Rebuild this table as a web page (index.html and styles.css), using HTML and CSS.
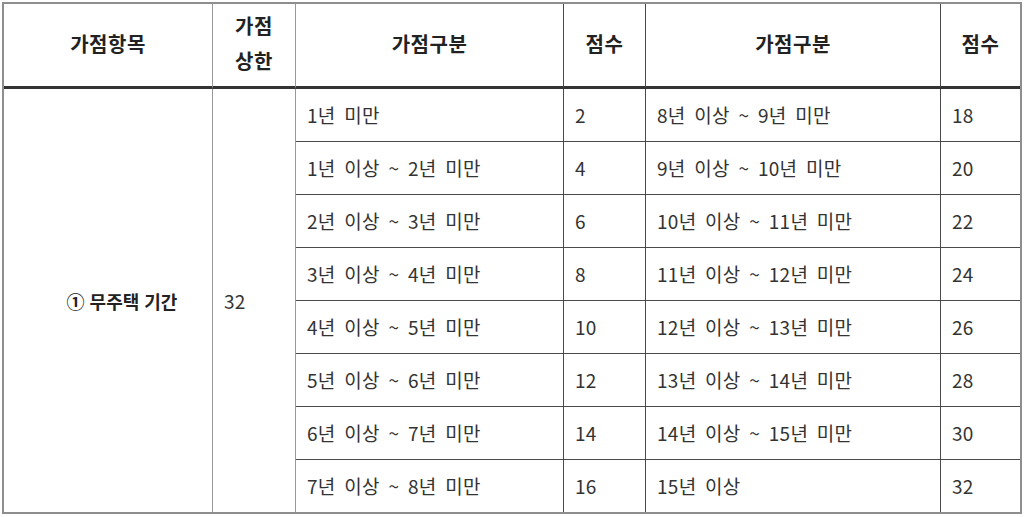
FILE: index.html
```html
<!DOCTYPE html>
<html lang="ko">
<head>
<meta charset="utf-8">
<link rel="stylesheet" href="styles.css">
</head>
<body>
<div class="wrap">
<table class="score">
  <colgroup>
    <col class="c1"><col class="c2"><col class="c3"><col class="c4"><col class="c5"><col class="c6">
  </colgroup>
  <thead>
    <tr>
      <th>가점항목</th>
      <th class="narrow">가점<br>상한</th>
      <th>가점구분</th>
      <th>점수</th>
      <th>가점구분</th>
      <th class="last">점수</th>
    </tr>
  </thead>
  <tbody>
    <tr>
      <td rowspan="8" class="item">① 무주택 기간</td>
      <td rowspan="8" class="lim">32</td>
      <td>1년 미만</td><td>2</td><td>8년 이상 ~ 9년 미만</td><td class="last">18</td>
    </tr>
    <tr><td>1년 이상 ~ 2년 미만</td><td>4</td><td>9년 이상 ~ 10년 미만</td><td class="last">20</td></tr>
    <tr><td>2년 이상 ~ 3년 미만</td><td>6</td><td>10년 이상 ~ 11년 미만</td><td class="last">22</td></tr>
    <tr><td>3년 이상 ~ 4년 미만</td><td>8</td><td>11년 이상 ~ 12년 미만</td><td class="last">24</td></tr>
    <tr><td>4년 이상 ~ 5년 미만</td><td>10</td><td>12년 이상 ~ 13년 미만</td><td class="last">26</td></tr>
    <tr><td>5년 이상 ~ 6년 미만</td><td>12</td><td>13년 이상 ~ 14년 미만</td><td class="last">28</td></tr>
    <tr><td>6년 이상 ~ 7년 미만</td><td>14</td><td>14년 이상 ~ 15년 미만</td><td class="last">30</td></tr>
    <tr class="end"><td>7년 이상 ~ 8년 미만</td><td>16</td><td>15년 이상</td><td class="last">32</td></tr>
  </tbody>
</table>
</div>
</body>
</html>
```
FILE: styles.css
```css
* { box-sizing: border-box; }
html, body { margin: 0; padding: 0; background: #fff; }
body {
  font-family: "Noto Sans CJK KR", "Noto Sans", sans-serif;
  color: #333;
}
.wrap { padding: 2px 2px 0 2px; }
.score {
  width: 1020px;
  table-layout: fixed;
  border-collapse: separate;
  border-spacing: 0;
  border: 2px solid #8e8e8e;
}
.c1 { width: 209px; }
.c2 { width: 83px; }
.c3 { width: 268px; }
.c4 { width: 82px; }
.c5 { width: 295px; }
.c6 { width: 79px; }

.score th, .score td {
  border-right: 1px solid #4a4a4a;
  border-bottom: 1px solid #4a4a4a;
  padding: 0 0 0 11px;
  vertical-align: middle;
}
.score th.last, .score td.last { border-right: none; }

.score th {
  height: 85px;
  font-size: 20px;
  font-weight: 700;
  color: #222;
  text-align: center;
  padding: 0 0 4px 0;
  line-height: 35px;
  letter-spacing: 0.5px;
  border-bottom: 3px solid #333;
}
.score th:nth-child(1), .score th:nth-child(2) { border-right-color: #999; }

.score td {
  height: 53px;
  font-size: 19px;
  font-weight: 400;
  line-height: 24px;
  word-spacing: 3px;
  letter-spacing: 0.3px;
}
.score tr.end td { height: 52px; border-bottom: none; }
.score td.item {
  text-align: center;
  padding: 0 0 0 28px;
  font-weight: 700;
  font-size: 18px;
  word-spacing: 0;
  letter-spacing: 0;
  color: #222;
  border-bottom: none;
  border-right-color: #999;
}
.score td.lim {
  border-bottom: none;
  border-right-color: #999;
}
```
